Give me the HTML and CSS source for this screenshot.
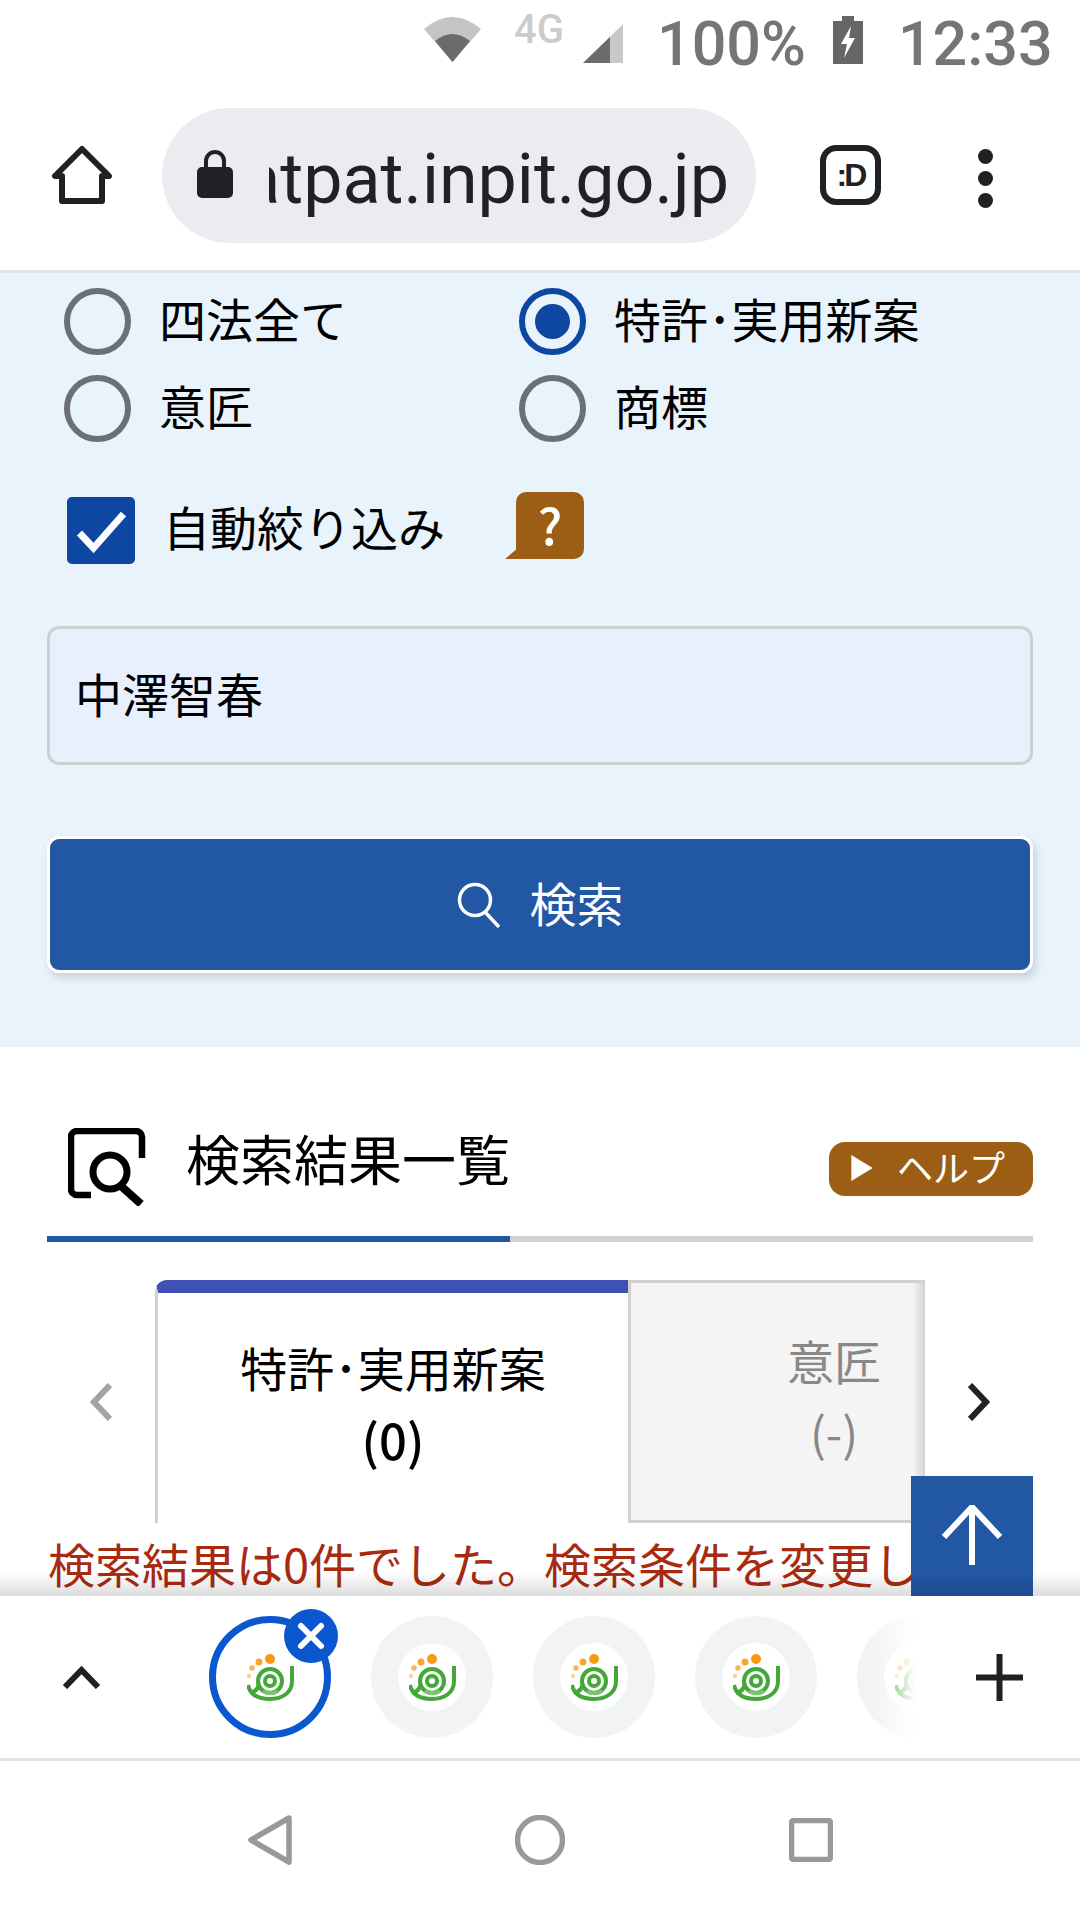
FILE: index.html
```html
<!DOCTYPE html>
<html lang="ja">
<head>
<meta charset="utf-8">
<title>J-PlatPat</title>
<link rel="stylesheet" href="styles.css">
</head>
<body>
<svg class="defs" width="0" height="0" aria-hidden="true">
  <symbol id="fav" viewBox="0 0 47 47">
    <circle cx="23" cy="5" r="5" fill="#f59a14"/>
    <circle cx="12" cy="8" r="3.500" fill="#f7a634"/>
    <circle cx="5" cy="14" r="2.800" fill="#f9b860"/>
    <circle cx="2" cy="22" r="2.200" fill="#fbd09a"/>
    <g fill="none" stroke="#43a838" stroke-width="4">
      <circle cx="23" cy="27" r="5"/>
      <circle cx="23" cy="27" r="12"/>
      <path d="M1 31C3 41 12 45 23 45 35 45 45 39 45 27V12"/>
      <path d="M12 30C11 35 8 38 3 39"/>
      <path d="M16 37C20 40 27 40 31 37" stroke="#7cc474"/>
    </g>
  </symbol>
</svg>

<header class="status">
  <svg class="st-wifi" viewBox="0 0 57 45"><path d="M0 12Q28-12 57 12L28.500 45Z" fill="#c4c4c4"/><path d="M11 24Q28 10 46 24L28.500 45Z" fill="#6b6b6b"/></svg>
  <span class="st-net">4G</span>
  <svg class="st-signal" viewBox="0 0 40 39"><path d="M0 39 40 0V39Z" fill="#c8c8c8"/><path d="M0 39 27 13V39Z" fill="#6b6b6b"/></svg>
  <span class="st-text st-pct">100%</span>
  <svg class="st-batt" viewBox="0 0 30 48"><path d="M9 0H21V5H30V48H0V5H9Z" fill="#666"/><path d="M18 10 8 28H14L11 42 22 22H16Z" fill="#fff"/></svg>
  <span class="st-text st-time">12:33</span>
</header>

<nav class="toolbar">
  <svg class="home" viewBox="0 0 62 60"><path d="M31 4 4 31H11V56H51V31H58Z" fill="none" stroke="#202124" stroke-width="6" stroke-linejoin="round"/></svg>
  <div class="omni">
    <svg class="lock" viewBox="0 0 36 48"><path d="M9 18V11a9 9 0 0 1 18 0v7" fill="none" stroke="#202124" stroke-width="4"/><rect y="17" width="36" height="31" rx="5" fill="#202124"/></svg>
    <div class="url"><span>www.j-platpat.inpit.go.jp</span></div>
  </div>
  <div class="dicon">:D</div>
  <div class="dots"><i></i><i></i><i></i></div>
</nav>

<main class="content">
  <section class="search">
    <div class="radios">
      <label class="opt"><span class="radio"></span><span class="opt-text">四法全て</span></label>
      <label class="opt"><span class="radio on"></span><span class="opt-text">特許･実用新案</span></label>
      <label class="opt"><span class="radio"></span><span class="opt-text">意匠</span></label>
      <label class="opt"><span class="radio"></span><span class="opt-text">商標</span></label>
    </div>
    <div class="auto">
      <span class="check"><svg viewBox="0 0 67 67"><path d="M12 36 26 51 56 17" fill="none" stroke="#fff" stroke-width="7"/></svg></span>
      <span class="auto-label">自動絞り込み</span>
      <span class="q"><svg class="q-tail" viewBox="0 0 14 12"><path d="M14 0V12H0Z" fill="#9c5e14"/></svg>?</span>
    </div>
    <div class="field">中澤智春</div>
    <button class="go">
      <svg class="go-icon" viewBox="0 0 44 46"><circle cx="18" cy="18" r="15.500" fill="none" stroke="#fff" stroke-width="3.500"/><path d="M28 30 42 45" stroke="#fff" stroke-width="3.500"/></svg>
      <span class="go-text">検索</span>
    </button>
  </section>

  <section class="results">
    <div class="res-head">
      <svg class="res-icon" viewBox="0 0 78 78"><path d="M23 67H9a6 6 0 0 1-6-6V9a6 6 0 0 1 6-6h59a6 6 0 0 1 6 6v21" fill="none" stroke="#000" stroke-width="6.500"/><circle cx="42" cy="44" r="17" fill="none" stroke="#000" stroke-width="7"/><path d="M53 58 73 76" stroke="#000" stroke-width="8"/></svg>
      <h2 class="res-title">検索結果一覧</h2>
      <span class="help"><svg class="help-arrow" viewBox="0 0 23 28"><path d="M0 0 23 14 0 28Z" fill="#fff"/></svg><span class="help-text">ヘルプ</span></span>
    </div>
    <div class="rule"><div class="rule-on"></div></div>
    <div class="tabs">
      <svg class="arrow" viewBox="0 0 22 38"><path d="M20 2 4 19 20 36" fill="none" stroke="#a3a3a3" stroke-width="6"/></svg>
      <div class="tablist">
        <div class="tab active"><span>特許･実用新案</span><span class="count">(0)</span></div>
        <div class="tab"><span>意匠</span><span>(-)</span></div>
      </div>
      <svg class="arrow next" viewBox="0 0 22 38"><path d="M2 2 18 19 2 36" fill="none" stroke="#222" stroke-width="6"/></svg>
    </div>
    <p class="error">検索結果は0件でした。検索条件を変更して再度検索してください。</p>
  </section>

  <a class="up"><svg viewBox="0 0 60 60"><path d="M30 2V60M2 32 30 2 58 32" fill="none" stroke="#fff" stroke-width="6"/></svg></a>
</main>

<div class="strip">
  <svg class="chev" viewBox="0 0 39 23"><path d="M3 21 19.500 4 36 21" fill="none" stroke="#202124" stroke-width="6"/></svg>
  <div class="tabstrip">
    <div class="ct cur"><svg class="fav"><use href="#fav"/></svg><span class="close"><svg viewBox="0 0 54 54"><path d="M17 17 37 37M37 17 17 37" stroke="#fff" stroke-width="6" stroke-linecap="round"/></svg></span></div>
    <div class="ct"><span class="plate"><svg class="fav"><use href="#fav"/></svg></span></div>
    <div class="ct"><span class="plate"><svg class="fav"><use href="#fav"/></svg></span></div>
    <div class="ct"><span class="plate"><svg class="fav"><use href="#fav"/></svg></span></div>
    <div class="ct"><span class="plate"><svg class="fav"><use href="#fav"/></svg></span></div>
  </div>
  <svg class="plus" viewBox="0 0 47 47"><path d="M23.500 0V47M0 23.500H47" stroke="#202124" stroke-width="6"/></svg>
</div>

<footer class="navbar">
  <svg class="nav-back" viewBox="0 0 44 50"><path d="M41 3 3 25 41 47Z" fill="none" stroke="#999" stroke-width="5.500" stroke-linejoin="round"/></svg>
  <svg class="nav-home" viewBox="0 0 50 50"><circle cx="25" cy="25" r="22.500" fill="none" stroke="#999" stroke-width="5.500"/></svg>
  <svg class="nav-rec" viewBox="0 0 44 44"><rect x="2.500" y="2.500" width="39" height="39" rx="2" fill="none" stroke="#999" stroke-width="5.500"/></svg>
</footer>
</body>
</html>
```
FILE: styles.css
```css
* { box-sizing: border-box; }
html, body { margin: 0; padding: 0; }
body {
  width: 1080px;
  height: 1920px;
  display: flex;
  flex-direction: column;
  overflow: hidden;
  background: #fff;
  color: #000;
  font-family: "Noto Sans CJK JP", "Noto Sans", Roboto, sans-serif;
  font-size: 47px;
}
.defs { display: block; height: 0; }

/* status bar */
.status {
  height: 90px;
  flex: none;
  display: flex;
  align-items: flex-start;
  color: #757575;
  font-family: Roboto, sans-serif;
}
.st-wifi { width: 57px; height: 45px; margin: 17px 0 0 424px; }
.st-net { width: 50px; margin: 10px 0 0 33px; font-size: 40px; font-weight: 500; color: #ccc; line-height: 40px; }
.st-signal { width: 40px; height: 39px; margin: 24px 0 0 19px; }
.st-text { font-size: 61px; font-weight: 500; line-height: 60px; margin-top: 14px; }
.st-pct { margin-left: 34px; }
.st-batt { width: 30px; height: 48px; margin: 16px 0 0 27px; }
.st-time { margin-left: 35px; }

/* browser toolbar */
.toolbar {
  height: 183px;
  flex: none;
  display: flex;
  align-items: flex-start;
  border-bottom: 3px solid #e0e3e3;
}
.home { width: 62px; height: 60px; margin: 55px 0 0 51px; flex: none; }
.omni {
  width: 594px;
  height: 135px;
  margin: 18px 0 0 49px;
  flex: none;
  display: flex;
  align-items: center;
  background: #ebecf0;
  border-radius: 68px;
  padding-left: 35px;
}
.lock { width: 36px; height: 48px; flex: none; margin-top: -4px; }
.url {
  width: 460px;
  margin: 7px 0 0 36px;
  overflow: hidden;
  display: flex;
  justify-content: flex-end;
  white-space: nowrap;
  font-family: Roboto, sans-serif;
  font-size: 70px;
  line-height: 96px;
  color: #202124;
}
.dicon {
  width: 61px;
  height: 60px;
  margin: 55px 0 0 64px;
  flex: none;
  border: 6px solid #202124;
  border-radius: 16px;
  font-family: "Liberation Sans", sans-serif;
  font-weight: 700;
  font-size: 32px;
  letter-spacing: -3px;
  line-height: 48px;
  text-align: center;
  color: #202124;
}
.dots { display: flex; flex-direction: column; gap: 7px; margin: 59px 0 0 97px; }
.dots i { display: block; width: 15px; height: 15px; border-radius: 50%; background: #202124; }

/* scrolling page */
.content { height: 1323px; flex: none; position: relative; overflow: hidden; }
.content::after {
  content: "";
  position: absolute;
  left: 0;
  right: 0;
  bottom: 0;
  height: 24px;
  background: linear-gradient(rgba(0,0,0,0), rgba(0,0,0,.14));
}

.search { height: 774px; background: #e8f3fc; padding: 15px 47px 0; }
.radios { display: grid; grid-template-columns: 455px 1fr; row-gap: 20px; padding-left: 17px; }
.opt { display: flex; align-items: center; gap: 28px; height: 67px; }
.opt-text { line-height: 60px; margin-bottom: 7px; }
.radio {
  width: 67px;
  height: 67px;
  flex: none;
  border: 6px solid #6c7074;
  border-radius: 50%;
  display: flex;
  align-items: center;
  justify-content: center;
}
.radio.on { border-color: #0d47a1; }
.radio.on::before { content: ""; width: 35px; height: 35px; border-radius: 50%; background: #0d47a1; }

.auto { display: flex; align-items: center; margin: 55px 0 0 20px; height: 67px; }
.check { width: 68px; height: 67px; flex: none; background: #0d47a1; border-radius: 5px; display: block; }
.check svg { display: block; width: 100%; height: 100%; }
.auto-label { margin: 0 0 10px 28px; width: 353px; flex: none; white-space: nowrap; line-height: 60px; }
.q {
  position: relative;
  width: 68px;
  height: 67px;
  margin: -10px 0 0 0;
  flex: none;
  background: #9c5e14;
  border-radius: 10px 10px 10px 0;
  color: #fff;
  font-size: 50px;
  font-weight: 500;
  line-height: 62px;
  text-align: center;
}
.q-tail { position: absolute; left: -11px; bottom: 0; width: 14px; height: 12px; }

.field {
  height: 139px;
  margin-top: 62px;
  padding-left: 25px;
  background: #e8f0fe;
  border: 3px solid #cdd0d3;
  border-radius: 12px;
  line-height: 128px;
}
.go {
  width: 100%;
  height: 137px;
  margin-top: 71px;
  display: flex;
  align-items: center;
  justify-content: center;
  gap: 29px;
  background: #2257a4;
  border: 3px solid #fff;
  border-radius: 12px;
  box-shadow: 3px 5px 8px rgba(0,0,0,.14);
  color: #fff;
  font: inherit;
}
.go-text { margin-bottom: 6px; line-height: 60px; }
.go-icon { width: 44px; height: 46px; }

/* results */
.results { padding: 81px 47px 0; }
.res-head { display: flex; align-items: center; height: 78px; padding-left: 21px; }
.res-icon { width: 78px; height: 78px; flex: none; }
.res-title { margin: 0 0 18px 40px; font-size: 54px; font-weight: 400; line-height: 62px; flex: 1; }
.help {
  width: 204px;
  height: 54px;
  margin-top: 4px;
  display: flex;
  align-items: center;
  padding-left: 22px;
  gap: 24px;
  background: #9c5e14;
  border-radius: 16px;
  color: #fff;
  font-size: 36px;
  white-space: nowrap;
}
.help-text { line-height: 44px; margin-bottom: 7px; }
.help-arrow { width: 22px; height: 26px; flex: none; margin-bottom: 2px; }
.rule { height: 6px; margin-top: 30px; background: #d0d0d0; }
.rule-on { width: 463px; height: 100%; background: #2257a4; }

.tabs { display: flex; align-items: center; margin-top: 38px; height: 243px; }
.arrow { width: 22px; height: 38px; flex: none; margin: 0 43px; }
.arrow.next { margin: 0 0 0 43px; }
.tablist {
  position: relative;
  width: 770px;
  height: 243px;
  flex: none;
  display: flex;
  overflow: hidden;
}
.tablist::after {
  content: "";
  position: absolute;
  top: 3px;
  right: 0;
  bottom: 0;
  width: 12px;
  background: linear-gradient(90deg, rgba(0,0,0,0), rgba(0,0,0,.14));
}
.tab {
  width: 412px;
  flex: none;
  display: flex;
  flex-direction: column;
  align-items: center;
  padding-top: 41px;
  line-height: 72px;
  color: #888;
  background: #f4f4f4;
  border: 3px solid #d0d0d0;
}
.tab.active {
  width: 473px;
  padding-top: 38px;
  color: #000;
  background: #fff;
  border-width: 13px 0 0 3px;
  border-color: #3f51b5 #d0d0d0;
  border-radius: 12px 0 0 0;
}
.count { font-size: 49px; font-weight: 500; }
.error { margin: 4px 0 0 1px; color: #a82a10; line-height: 72px; }

.up {
  position: absolute;
  right: 47px;
  bottom: 0;
  width: 122px;
  height: 120px;
  display: flex;
  justify-content: center;
  padding-top: 29px;
  background: #2257a4;
}
.up svg { width: 60px; height: 60px; }

/* tab strip */
.strip {
  height: 165px;
  flex: none;
  display: flex;
  align-items: center;
  padding-left: 62px;
  border-bottom: 3px solid #e0e3e3;
}
.chev { width: 39px; height: 23px; flex: none; }
.tabstrip {
  position: relative;
  width: 706px;
  height: 162px;
  margin-left: 108px;
  flex: none;
  display: flex;
  align-items: center;
  gap: 40px;
  overflow: hidden;
}
.tabstrip::after {
  content: "";
  position: absolute;
  top: 0;
  right: 0;
  bottom: 0;
  width: 44px;
  background: linear-gradient(90deg, rgba(255,255,255,0), #fff);
}
.ct {
  position: relative;
  width: 122px;
  height: 122px;
  flex: none;
  display: flex;
  align-items: center;
  justify-content: center;
  border-radius: 50%;
  background: #f2f3f5;
}
.ct.cur { background: #fff; border: 7px solid #0b57d0; }
.plate {
  width: 68px;
  height: 68px;
  display: flex;
  align-items: center;
  justify-content: center;
  border-radius: 50%;
  background: #fff;
}
.fav { width: 47px; height: 47px; display: block; }
.close {
  position: absolute;
  top: -14px;
  right: -14px;
  width: 54px;
  height: 54px;
  border-radius: 50%;
  background: #0b57d0;
}
.close svg { display: block; width: 54px; height: 54px; }
.plus { width: 47px; height: 47px; margin-left: 61px; flex: none; }

/* android nav */
.navbar { flex: 1; display: flex; align-items: center; padding-left: 248px; padding-bottom: 2px; }
.nav-back { width: 44px; height: 50px; flex: none; }
.nav-home { width: 50px; height: 50px; flex: none; margin-left: 223px; }
.nav-rec { width: 44px; height: 44px; flex: none; margin-left: 224px; }
```
